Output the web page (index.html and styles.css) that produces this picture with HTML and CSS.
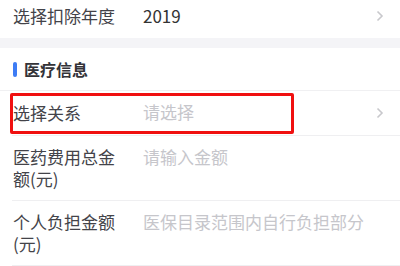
FILE: index.html
```html
<!DOCTYPE html>
<html lang="zh-CN">
<head>
    <meta charset="UTF-8">
    <meta name="viewport" content="width=device-width, initial-scale=1.0">
    <title>医疗信息</title>
    <link rel="stylesheet" href="styles.css">
</head>
<body>
    <div class="group">
        <div class="row row-first">
            <div class="label">选择扣除年度</div>
            <div class="value">2019</div>
            <svg class="chevron" viewBox="0 0 8 12"><path d="M1.5 1.5 L6 6 L1.5 10.5" /></svg>
        </div>
    </div>

    <div class="gap"></div>

    <div class="group">
        <div class="section-title">
            <span class="bar"></span>
            <span>医疗信息</span>
        </div>

        <div class="row">
            <div class="label">选择关系</div>
            <div class="value placeholder">请选择</div>
            <svg class="chevron" viewBox="0 0 8 12"><path d="M1.5 1.5 L6 6 L1.5 10.5" /></svg>
            <!-- red annotation frame from the screenshot -->
            <div class="highlight"></div>
        </div>

        <div class="row">
            <div class="label">医药费用总金额(元)</div>
            <div class="value placeholder">请输入金额</div>
        </div>

        <div class="row">
            <div class="label">个人负担金额(元)</div>
            <div class="value placeholder">医保目录范围内自行负担部分</div>
        </div>
    </div>
</body>
</html>
```

FILE: styles.css
```css
body {
    margin: 0;
    padding: 0;
    background-color: #ffffff;
    font-family: "Noto Sans CJK SC", "Noto Sans", sans-serif;
    color: #3d3d42;
    overflow: hidden;
}

.group {
    background-color: #ffffff;
}

.gap {
    height: 10px;
    background-color: #f4f4f7;
}

.section-title {
    display: flex;
    align-items: center;
    gap: 7px;
    height: 42px;
    padding: 0 13px;
    font-size: 16px;
    font-weight: bold;
    color: #333338;
    border-bottom: 1px solid #f0f0f2;
}

.section-title .bar {
    width: 4px;
    height: 15px;
    border-radius: 2px;
    background-color: #3d7cf5;
}

.row {
    position: relative;
    display: flex;
    align-items: center;
    min-height: 24px;
    margin-left: 12px;
    padding: 10px 16px 10px 1px;
    border-bottom: 1px solid #efeff1;
    font-size: 17px;
    line-height: 22px;
}

.row-first {
    min-height: 22px;
    padding-top: 5px;
    padding-bottom: 11px;
    border-bottom: none;
}

.label {
    width: 106px;
    flex-shrink: 0;
    color: #434349;
}

.value {
    flex-grow: 1;
    margin-left: 24px;
    align-self: flex-start;
    color: #333;
}

.placeholder {
    color: #c6c6cb;
}

.chevron {
    width: 8px;
    height: 12px;
    fill: none;
    stroke: #c8c8cc;
    stroke-width: 1.6;
}

.highlight {
    position: absolute;
    left: -2px;
    top: 2px;
    width: 284px;
    height: 41px;
    box-sizing: border-box;
    border: 3px solid #f01010;
    border-radius: 2px;
}
```
